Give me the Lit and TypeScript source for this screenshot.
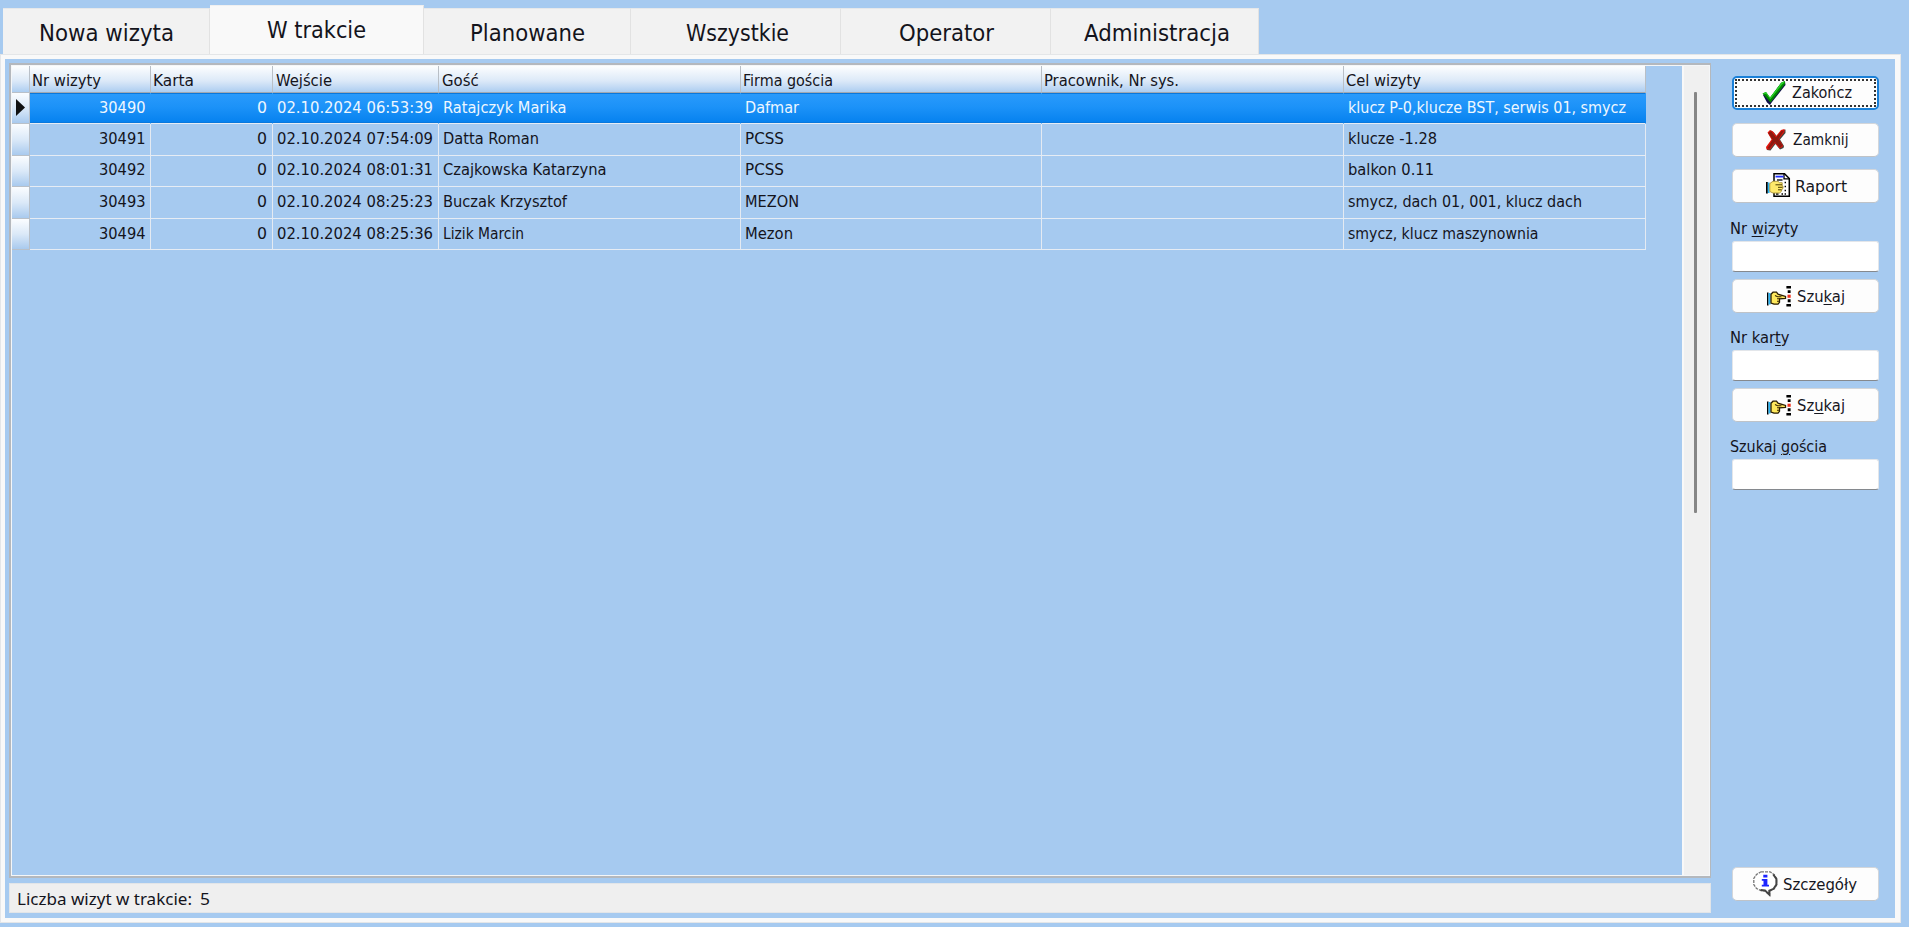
import { LitElement, html, css, svg, nothing } from "lit";
import { customElement, property } from "lit/decorators.js";

/** One line of text, condensed or widened to an exact advance width. */
@customElement("fit-text")
class FitText extends LitElement {
  @property({ type: Number }) w = 0;
  static styles = css`
    :host { display: inline-block; white-space: pre; flex: none; }
    .t { display: inline-block; transform-origin: 0 50%; }
  `;
  firstUpdated() {
    const t = this.renderRoot.querySelector(".t") as HTMLElement;
    const natural = t.getBoundingClientRect().width;
    const full = this.w + 2;
    this.style.width = full + "px";
    if (natural) t.style.transform = `scaleX(${full / natural})`;
  }
  render() {
    return html`<span class="t"><slot></slot></span>`;
  }
}

const TABS = [
  { label: "Nowa wizyta", w: 133, cls: "t1" },
  { label: "W trakcie", w: 97, cls: "t2 active" },
  { label: "Planowane", w: 113, cls: "t3" },
  { label: "Wszystkie", w: 101, cls: "t4" },
  { label: "Operator", w: 93, cls: "t5" },
  { label: "Administracja", w: 144, cls: "t6" },
];

const COLS: [string, number][] = [
  ["Nr wizyty", 67], ["Karta", 39], ["Wejście", 54], ["Gość", 34.7],
  ["Firma gościa", 88], ["Pracownik, Nr sys.", 133], ["Cel wizyty", 73],
];

type Cell = [string, number];
const ROWS: { nr: string; date: string; guest: Cell; firm: Cell; goal: Cell }[] = [
  { nr: "30490", date: "02.10.2024 06:53:39", guest: ["Ratajczyk Marika", 121.5], firm: ["Dafmar", 52], goal: ["klucz P-0,klucze BST, serwis 01, smycz", 276] },
  { nr: "30491", date: "02.10.2024 07:54:09", guest: ["Datta Roman", 94], firm: ["PCSS", 37], goal: ["klucze -1.28", 87] },
  { nr: "30492", date: "02.10.2024 08:01:31", guest: ["Czajkowska Katarzyna", 161.5], firm: ["PCSS", 37], goal: ["balkon 0.11", 84] },
  { nr: "30493", date: "02.10.2024 08:25:23", guest: ["Buczak Krzysztof", 122], firm: ["MEZON", 52], goal: ["smycz, dach 01, 001, klucz dach", 232] },
  { nr: "30494", date: "02.10.2024 08:25:36", guest: ["Lizik Marcin", 79], firm: ["Mezon", 46], goal: ["smycz, klucz maszynownia", 188.5] },
];

const checkIcon = svg`
  <path d="M1 14 L4 12 L8 17 L19 2 L23 .5 L23.5 4 L10 21 L8 24 L5 21.5 Z" fill="#10104a"/>
  <path d="M.5 12.5 L4 11 L8 16.5 L19.5 1.5 L23 0 L23 3 L8.5 21.5 Z" fill="#008a00"/>
  <path d="M.5 12.5 L4 11 L8 16.5 L19.5 1.5 L23 0 L21 3.5 L8.2 19 L3.5 13 Z" fill="#28d428"/>
  <path d="M2.6 13.5 L4.2 13 L8.3 18.5 L20 3.5 L22.4 2 L22.4 3 L8.5 21 Z" fill="#008400"/>`;

const crossIcon = svg`
  <path d="M2 4 L5 1.5 L8 3.5 L11 7.5 L15.5 1.5 L19.5 .5 L19.5 4 L14 10.5 L18 17 L17.5 19 L14 20.5 L9.5 15 L4.5 21.5 L1 21 L1 18 L6.5 11 Z" fill="#3f463f"/>
  <path d="M1.5 3.5 L4 1 L7 2.5 L10.2 7 L15 1 L18.5 0 L18.5 3 L13 10 L17 16.5 L16.5 18 L13.5 19.5 L9 14 L4 20.5 L.5 20.5 L0 18 L5.5 10.5 Z" fill="#e3150d"/>
  <path d="M2.4 4 L5 2 L10 8.5 L15.5 2 L18 1.6 L12.4 10 L16.4 16.5 L14 18.8 L9 13 L3.5 19.8 L1.5 19.3 L6.6 10.5 Z" fill="#8b1a10"/>`;

const reportIcon = svg`
  <path d="M8 .7 H18.5 L23.3 5.5 V23.3 H8 Z" fill="#fff" stroke="#000" stroke-width="1.5"/>
  <path d="M18 1 V5.8 H23" fill="none" stroke="#000" stroke-width="1.3"/>
  <path d="M9.5 3.6 H17.5" stroke="#2030ff" stroke-width="1.8"/>
  <path d="M11 7 H16.5" stroke="#000" stroke-width="1.3"/>
  <path d="M18.6 9.5 H20 M18.6 13.5 H20 M18.6 17.5 H20 M10 21 H12.5 M15.5 21 H17 M18.6 21 H20" stroke="#000" stroke-width="1.4"/>
  <path d="M0 9 H1.8 V20.5 H0 Z" fill="#000"/>
  <path d="M1.8 9.5 H3.6 V20 H1.8 Z" fill="#29b6f6"/>
  <path d="M3.8 10.5 L7 8.3 H12 L13.5 9.7 H16.2 V13 L17 13.2 V15.5 L16 16 L15.3 18.5 L13.5 20 H7 L3.8 18.5 Z" fill="#ffe96a" stroke="#a8923a" stroke-width=".9"/>
  <path d="M9.5 11.8 H16 M12 14.3 H16.5 M12 16.8 H15.5" stroke="#4c3d00" stroke-width="1"/>`;

const handIcon = svg`
  <path d="M0 6.5 H1.5 V19.5 H0 Z" fill="#000"/>
  <path d="M1.5 7 H3.6 V18.5 H1.5 Z" fill="#29b6f6"/>
  <path d="M4 8.3 L6 6.2 H9.5 L11 8.2 L18.5 10.4 V12.4 L12.5 12.8 V16.3 L11 18.2 H7 L4 17 Z" fill="#ffe95c" stroke="#2a1d00" stroke-width="1.3"/>
  <path d="M8 9.6 L10.5 10.8 H14.5 M10 12.8 H13 M10 15.3 H12.5" stroke="#3a2600" fill="none" stroke-width="1.1"/>
  <path d="M19.4 0 H24 V2.6 H19.4 Z M20.7 4.2 H23.6 V7 H20.7 Z M20.7 13.2 H23.6 V16.2 H20.7 Z M19.4 18 H24 V20.6 H19.4 Z" fill="#000"/>
  <path d="M20.5 8.7 H23.7 V11.8 H20.5 Z" fill="#f0301c"/>`;

const infoIcon = svg`
  <path d="M8 .8 H17 L21 3.4 L23.6 7.5 V14 L21 18 L16.8 20.3 V24 L11.5 19.8 H8.5 L3.5 17.5 L.8 13.5 V7.5 L3.5 3.4 Z" fill="#fff" stroke="#777" stroke-width="1.3" stroke-dasharray="3 1"/>
  <path d="M20.3 3.5 L23.4 8 V13.5 L20.6 17.8 L16.3 19.7 V23.6 L12 19.4 L7.5 19" fill="none" stroke="#444" stroke-width="2"/>
  <path d="M10.3 3.7 H14.4 V6.4 H10.3 Z M8.8 8 H14.4 V13.7 H16 V15.5 H8.8 V13.7 H10.5 V9.8 H8.8 Z" fill="#1c24ff"/>`;

@customElement("app-root")
class AppRoot extends LitElement {
  static styles = css`
    :host {
      display: flex; flex-direction: column; box-sizing: border-box;
      width: 1909px; height: 927px; padding-bottom: 4px; overflow: hidden;
      background: #a6caf0; color: #14141c;
      font: 16px/20px "DejaVu Sans Condensed", "DejaVu Sans", sans-serif;
    }
    * { box-sizing: border-box; }
    .tabs { display: flex; align-items: flex-end; height: 54px; padding-left: 3px; flex: none; }
    .tab {
      height: 46px; background: #f2f2f2; border-top: 1px solid #e6e8ea;
      border-right: 1px solid #e2e2e2; font-size: 23px; line-height: 30px; padding-top: 9px;
    }
    .t1 { width: 207px; padding-left: 36px; }
    .t2 { width: 214px; padding-left: 57px; }
    .t3 { width: 207px; padding-left: 46px; }
    .t4 { width: 210px; padding-left: 55px; }
    .t5 { width: 210px; padding-left: 58px; }
    .t6 { width: 208px; padding-left: 33px; }
    .active { height: 49px; background: #f9f9f9; border-color: #f0f0f0 #e2e2e2 #f9f9f9; }
    .page {
      flex: 1; min-height: 0; display: flex; width: 1901px;
      border: solid #f9f9f9; border-width: 5px 6px 5px 5px;
      outline: 1px solid #e4e6e8; outline-offset: -1px;
      padding: 4px 0 5px 4px;
    }
    .main { width: 1702px; display: flex; flex-direction: column; gap: 5px; }
    .grid {
      flex: 1; min-height: 0; display: flex; justify-content: space-between;
      border: 2px solid #b4b8bd; border-right-width: 1px; box-shadow: inset 0 0 0 1px #f4f6f8; padding: 1px;
    }
    .table { width: 1634px; }
    .row {
      display: grid; height: 31.6px;
      grid-template-columns: 18px 121px 121.5px 166.5px 302px 301px 302px 302px;
    }
    .row > * {
      border-right: 1px solid #e4eaf2; border-bottom: 1px solid #e6ecf4;
      display: flex; align-items: center; padding: 0 0 1px 4px; overflow: hidden;
    }
    .row > .num { justify-content: flex-end; padding-right: 5px; }
    .row > .mark {
      padding: 0 0 0 4px;
      background: linear-gradient(#fbfdff, #dbe9f8 50%, #a9caee);
      border-right-color: #b9c0c8; border-bottom-color: #b9c0c8;
    }
    .head { height: 27px; background: linear-gradient(#fdfefe, #dce9f8 55%, #a9cbf0); }
    .head > * {
      padding: 3px 0 0 2px; border-right-color: #b9bfc6;
      border-bottom: 1px solid #a2a8b0;
    }
    .head > .mark { background: none; }
    .head > .wej { padding-left: 3px; }
    .head > .gosc { padding-left: 3px; }
    .sel { height: 31px; color: #eef7ff; background: linear-gradient(#2a9bfc, #1c92f8 45%, #0480ee); }
    .sel > * { border-right-color: transparent; box-shadow: inset 0 1px #0a78dc, inset 0 -1px #0a78dc; }
    .sel > .mark { box-shadow: none; padding-bottom: 2px; }
    .tri { width: 9px; height: 17px; fill: #111; flex: none; }
    .scroll {
      width: 27px; background: #f0f0f0; border-left: 2px solid #f8f8f8; padding: 26px 0 0 10px;
    }
    .thumb { width: 3px; height: 421px; background: #868686; border-radius: 1px; }
    .status {
      height: 30px; background: #efefef; border: 1px solid #e2e5e8; padding: 5px 0 0 7px;
      display: flex; font: 17px/20px "Noto Sans", sans-serif; gap: 8px;
    }
    .side {
      width: 148px; margin-left: 20px; display: flex; flex-direction: column; padding: 13px 0 12px 1px;
    }
    .btn {
      height: 34px; width: 147px; background: #fdfdfd; border: 1px solid #d3d6da; border-radius: 5px;
      border-bottom-color: #bfc3c8; display: flex; align-items: center; flex: none; margin-bottom: 12.5px;
      color: #16161e; position: relative; padding-top: 1px;
    }
    .btn svg { width: 25px; height: 25px; flex: none; overflow: visible; margin-top: -2px; }
    .btn.focus { border: 2px solid #1a80d8; padding-top: 0; }
    .btn.focus svg { margin-top: 0; }
    .ring { position: absolute; inset: 1px; border: 2px dotted #333; pointer-events: none; }
    .ok { padding-left: 28px; gap: 5px; }
    .no { padding-left: 33px; gap: 2px; }
    .btn.no svg { margin-top: 2px; }
    .rep { padding-left: 33px; gap: 4px; margin-bottom: 16px; }
    .find { padding-left: 34px; gap: 5px; margin-bottom: 15px; }
    .btn.find svg { margin-top: 3px; }
    .info { padding-left: 20px; gap: 5px; margin: auto 0 0; }
    .lbl { height: 20px; line-height: 20px; margin-left: -2px; flex: none; }
    .lbl u, .btn u { text-underline-offset: 2px; text-decoration-thickness: 1px; }
    .inp {
      height: 31px; width: 147px; margin: 2px 0 7px; border: 1px solid #e3e6ea; border-bottom: 1px solid #85898e;
      border-radius: 3px; background: #fff; flex: none; padding: 0 6px; outline: none;
    }
  `;

  icon(shape: unknown) {
    return html`<svg viewBox="0 0 25 25">${shape}</svg>`;
  }

  row(r: (typeof ROWS)[number], i: number) {
    return html`<div class="row ${i === 0 ? "sel" : ""}">
      <div class="mark">${i === 0 ? html`<svg class="tri" viewBox="0 0 9 17"><path d="M0 0L9 8.5L0 17Z"/></svg>` : nothing}</div>
      <div class="num"><fit-text .w=${44.5}>${r.nr}</fit-text></div>
      <div class="num"><fit-text .w=${8}>0</fit-text></div>
      <div><fit-text .w=${154}>${r.date}</fit-text></div>
      <div><fit-text .w=${r.guest[1]}>${r.guest[0]}</fit-text></div>
      <div><fit-text .w=${r.firm[1]}>${r.firm[0]}</fit-text></div>
      <div></div>
      <div><fit-text .w=${r.goal[1]}>${r.goal[0]}</fit-text></div>
    </div>`;
  }

  render() {
    return html`
      <div class="tabs">
        ${TABS.map((t) => html`<div class="tab ${t.cls}"><fit-text .w=${t.w}>${t.label}</fit-text></div>`)}
      </div>
      <div class="page">
        <div class="main">
          <div class="grid">
            <div class="table">
              <div class="row head">
                <div class="mark"></div>
                ${COLS.map(([l, w], i) => html`<div class="${i === 2 ? "wej" : i === 3 ? "gosc" : ""}"><fit-text .w=${w}>${l}</fit-text></div>`)}
              </div>
              ${ROWS.map((r, i) => this.row(r, i))}
            </div>
            <div class="scroll"><div class="thumb"></div></div>
          </div>
          <div class="status"><fit-text .w=${173}>Liczba wizyt w trakcie:</fit-text><fit-text .w=${8}>5</fit-text></div>
        </div>
        <div class="side">
          <div class="btn ok focus"><span class="ring"></span>${this.icon(checkIcon)}<fit-text .w=${58}>Zakończ</fit-text></div>
          <div class="btn no">${this.icon(crossIcon)}<fit-text .w=${53.5}>Zamknij</fit-text></div>
          <div class="btn rep">${this.icon(reportIcon)}<fit-text .w=${50}>Raport</fit-text></div>
          <div class="lbl"><fit-text .w=${66.5}>Nr <u>w</u>izyty</fit-text></div>
          <input class="inp" />
          <div class="btn find">${this.icon(handIcon)}<fit-text .w=${46}>Szu<u>k</u>aj</fit-text></div>
          <div class="lbl"><fit-text .w=${57.5}>Nr kar<u>t</u>y</fit-text></div>
          <input class="inp" />
          <div class="btn find">${this.icon(handIcon)}<fit-text .w=${46}>Sz<u>u</u>kaj</fit-text></div>
          <div class="lbl"><fit-text .w=${95}>Szukaj <u>g</u>ościa</fit-text></div>
          <input class="inp" />
          <div class="btn info">${this.icon(infoIcon)}<fit-text .w=${72}>Szczegóły</fit-text></div>
        </div>
      </div>`;
  }
}
